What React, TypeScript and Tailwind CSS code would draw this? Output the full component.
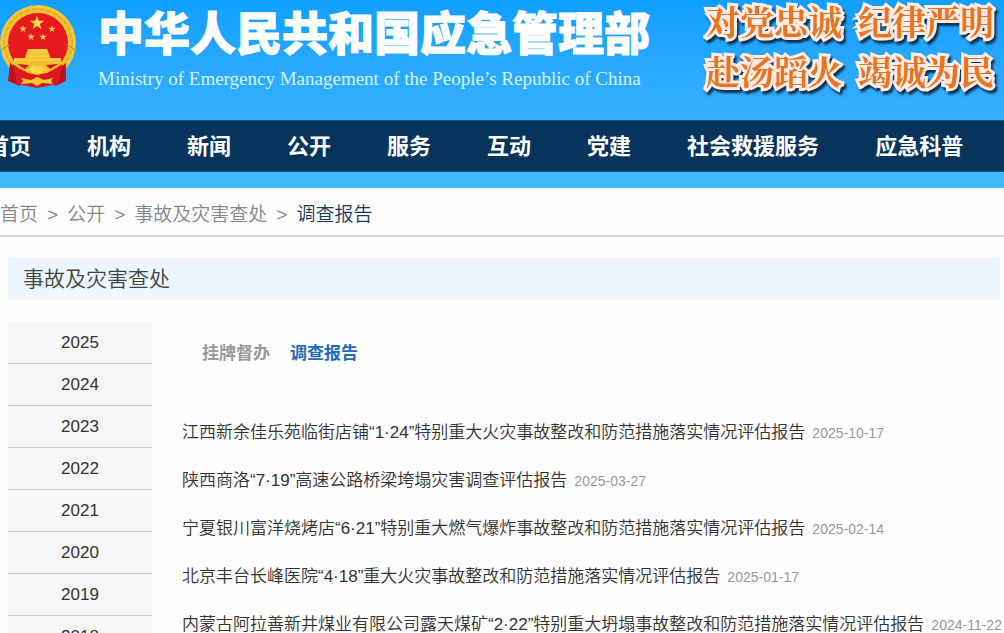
const navItems = ["首页", "机构", "新闻", "公开", "服务", "互动", "党建", "社会救援服务", "应急科普"];

const crumbs = ["首页", "公开", "事故及灾害查处"];

const slogans = [
  ["对党忠诚", "纪律严明"],
  ["赴汤蹈火", "竭诚为民"],
];

const years = [2025, 2024, 2023, 2022, 2021, 2020, 2019, 2018];

const reports = [
  { title: "江西新余佳乐苑临街店铺“1·24”特别重大火灾事故整改和防范措施落实情况评估报告", date: "2025-10-17" },
  { title: "陕西商洛“7·19”高速公路桥梁垮塌灾害调查评估报告", date: "2025-03-27" },
  { title: "宁夏银川富洋烧烤店“6·21”特别重大燃气爆炸事故整改和防范措施落实情况评估报告", date: "2025-02-14" },
  { title: "北京丰台长峰医院“4·18”重大火灾事故整改和防范措施落实情况评估报告", date: "2025-01-17" },
  { title: "内蒙古阿拉善新井煤业有限公司露天煤矿“2·22”特别重大坍塌事故整改和防范措施落实情况评估报告", date: "2024-11-22" },
];

const STAR = "M0 -10 L2.4 -3.1 L9.5 -3.1 L3.8 1.2 L5.9 8.1 L0 3.9 L-5.9 8.1 L-3.8 1.2 L-9.5 -3.1 L-2.4 -3.1 Z";

function Emblem() {
  return (
    <svg viewBox="0 0 78 86" className="h-[86px] w-[78px] shrink-0" role="img" aria-label="国徽">
      {/* wheat ring */}
      <circle cx="38" cy="39" r="38" fill="#f3c233" />
      <circle cx="38" cy="39" r="34" fill="none" stroke="#e3ae28" strokeWidth="2" strokeDasharray="5 2" />
      <circle cx="38" cy="39" r="36" fill="none" stroke="#f9d54c" strokeWidth="1" strokeDasharray="6 2" />
      <circle cx="38" cy="39" r="30" fill="#e8181f" />
      <path d="M66 40 L75 46 M10 40 L1 46" stroke="#b98519" strokeWidth="1" />
      {/* stars */}
      <g fill="#ffdb45">
        <path d={STAR} transform="translate(37 19) scale(.76)" />
        <path d={STAR} transform="translate(23 25) scale(.37)" />
        <path d={STAR} transform="translate(52 25) scale(.37)" />
        <path d={STAR} transform="translate(31 33) scale(.37)" />
        <path d={STAR} transform="translate(43 33) scale(.37)" />
      </g>
      {/* gate */}
      <path d="M28 45 L47 45 L49 50 L50 54 L61 54 L61 59 L14 59 L14 54 L25 54 L26 50 Z" fill="#ffd03c" />
      <path d="M27 50 H48 M25 54 H50" stroke="#e9b52c" strokeWidth="1" />
      {/* ribbons */}
      <path d="M10 59 L8 77 L20 82 L22 68 Z M66 59 L66 77 L55 82 L53 68 Z" fill="#c9101c" />
      <path d="M13 60 Q22 68 37 70 Q53 68 62 60 L58 80 L37 84 L17 80 Z" fill="#dd1620" />
      <path d="M13 57 H62 Q57 64 47 69 L37 71 L28 69 Q18 64 13 57 Z" fill="#f5bd31" />
      <path d="M17 60 L29 61 L25 65 Z M58 60 L46 61 L50 65 Z" fill="#d41520" />
      <path d="M29 65 L33 61 L37 63 L41 61 L45 65 L42 69 L37 70 L32 69 Z" fill="#ffd941" />
      <path d="M21 74 L31 76 L37 73 L44 76 L53 74 L51 77 L53 80 L42 79 L37 82 L32 79 L21 80 L23 77 Z" fill="#f8c932" />
      <path d="M12 64 L13 78 M63 64 L62 78" stroke="#9f1020" strokeWidth="1" />
    </svg>
  );
}

function Header() {
  return (
    <header className="bg-linear-to-b from-[#0f9fff] to-[#45b9ff] pb-4">
      <div className="flex h-[120px] items-start justify-between whitespace-nowrap pr-[10px]">
        <div className="flex gap-5 pt-1">
          <Emblem />
          <div className="text-white">
            <h1 className="text-[46px] leading-[60px] font-black [-webkit-text-stroke:1px_white]">
              中华人民共和国应急管理部
            </h1>
            <p className="font-['Liberation_Serif',serif] text-[19px] leading-[30px] text-[#d9f2ff]">
              Ministry of Emergency Management of the People’s Republic of China
            </p>
          </div>
        </div>
        <div className="flex flex-col gap-2 font-['Noto_Serif_CJK_SC','Noto_Sans_CJK_SC',serif] text-[34px] leading-[42px] font-bold text-[#e87522] drop-shadow-[2px_3px_1px_#12304c] [-webkit-text-stroke:6px_#ffece7] [paint-order:stroke_fill]">
          {slogans.map((line) => (
            <p key={line[0]} className="flex gap-4">
              {line.map((s) => (
                <span key={s}>{s}</span>
              ))}
            </p>
          ))}
        </div>
      </div>
      <nav className="overflow-hidden border-y border-[#175586] bg-[#06345a]">
        <ul className="-ml-[13px] flex gap-14 pt-[2px] text-[22px] leading-[48px] font-bold whitespace-nowrap text-white">
          {navItems.map((item) => (
            <li key={item}>
              <a href="#">{item}</a>
            </li>
          ))}
        </ul>
      </nav>
    </header>
  );
}

export default function App() {
  return (
    <div className="h-screen overflow-hidden bg-[#fefefe] font-['Liberation_Sans','Noto_Sans_CJK_SC',sans-serif] text-[#333]" lang="zh-CN">
      <Header />

      {/* Breadcrumb */}
      <nav className="flex h-[49px] items-center gap-[9px] border-b-2 border-[#d9d9d9] pt-2 text-[19px] font-[350] text-[#888]">
        {crumbs.map((c) => (
          <span key={c} className="flex gap-[9px]">
            <a href="#">{c}</a>
            <span>&gt;</span>
          </span>
        ))}
        <a href="#" className="text-[#173a61]">
          调查报告
        </a>
      </nav>

      <main className="pt-[21px] pr-1 pl-2">
        <h2 className="bg-linear-to-b from-[#edf4fe] to-[#eef8fd] pl-[15px] text-[21px] leading-[42px] font-[350] text-[#444]">
          事故及灾害查处
        </h2>

        <div className="flex pt-[22px]">
          <ul className="w-36 shrink-0 bg-[#f6f6f6] text-center text-[17px] leading-[41px]">
            {years.map((y) => (
              <li key={y} className="border-b border-[#ccc]">
                <a href="#" className="block">
                  {y}
                </a>
              </li>
            ))}
          </ul>

          <section className="min-w-0 flex-1 pt-5 pl-[30px]">
            <div className="flex gap-5 pl-5 text-[17px] leading-6 font-bold">
              <a href="#" className="text-[#999]">
                挂牌督办
              </a>
              <a href="#" className="text-[#1f6cbd]">
                调查报告
              </a>
            </div>
            <ul className="pt-[43px] whitespace-nowrap">
              {reports.map((r) => (
                <li key={r.date} className="flex h-12 items-center gap-[7px]">
                  <a href="#" className="text-[17px] font-[350]">
                    {r.title}
                  </a>
                  <span className="text-[14px] text-[#999]">{r.date}</span>
                </li>
              ))}
            </ul>
          </section>
        </div>
      </main>
    </div>
  );
}
